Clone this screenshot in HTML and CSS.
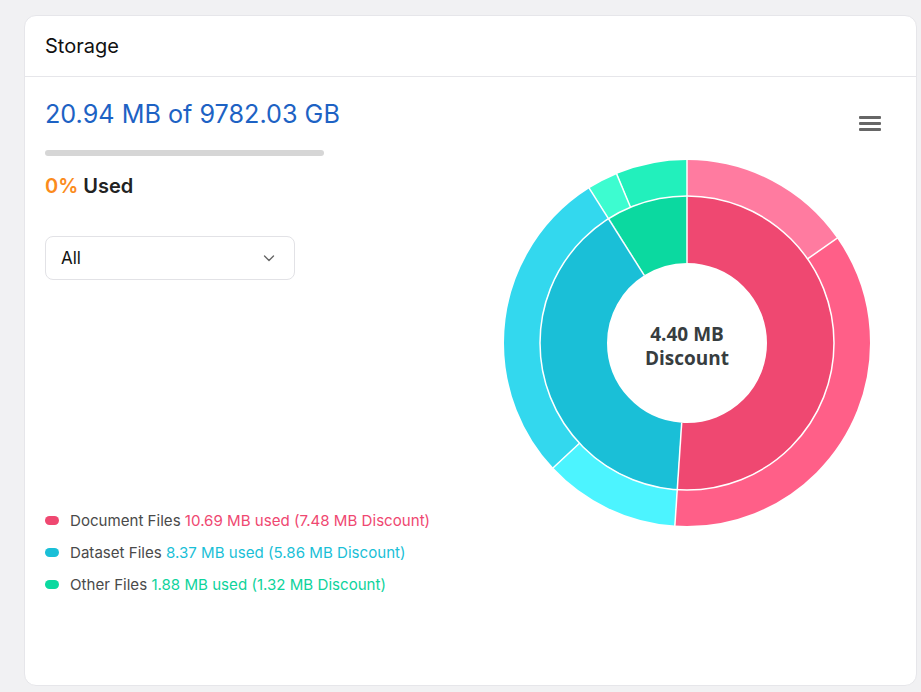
FILE: index.html
```html
<!DOCTYPE html>
<html lang="en">

<head>
    <meta charset="UTF-8">
    <meta name="viewport" content="width=device-width, initial-scale=1.0">
    <title>Storage</title>
    <link rel="stylesheet" href="styles.css">
</head>

<body>
    <div class="card">
        <div class="card-header">Storage</div>

        <div class="card-body">
            <div class="usage">
                <h2 class="usage-total">20.94 MB of 9782.03 GB</h2>
                <div class="progress"><div class="progress-fill"></div></div>
                <p class="usage-percent"><span class="percent">0%</span> Used</p>

                <div class="select">
                    <span>All</span>
                    <svg width="14" height="14" viewBox="0 0 14 14">
                        <path d="M2.5 5l4.5 4.5 4.5-4.5" fill="none" stroke="#666" stroke-width="1.4" stroke-linecap="round" stroke-linejoin="round" />
                    </svg>
                </div>

                <ul class="legend">
                    <li><span class="dot doc"></span>Document Files <span class="val doc-text">10.69 MB used (7.48 MB Discount)</span></li>
                    <li><span class="dot data"></span>Dataset Files <span class="val data-text">8.37 MB used (5.86 MB Discount)</span></li>
                    <li><span class="dot other"></span>Other Files <span class="val other-text">1.88 MB used (1.32 MB Discount)</span></li>
                </ul>
            </div>

            <div class="chart">
                <button class="menu" aria-label="menu">
                    <span></span><span></span><span></span>
                </button>
                <svg class="donut" width="380" height="380" viewBox="0 0 380 380">
                    <g transform="translate(190 190) rotate(-90)" fill="none">
                        <!-- outer ring: r 147..183 -->
                        <circle r="165" stroke="#ff7ba0" stroke-width="36" stroke-dasharray="158.68 1036.73" stroke-dashoffset="0" />
                        <circle r="165" stroke="#ff5f88" stroke-width="36" stroke-dasharray="370.63 1036.73" stroke-dashoffset="-158.68" />
                        <circle r="165" stroke="#4cf4ff" stroke-width="36" stroke-dasharray="124.41 1036.73" stroke-dashoffset="-529.31" />
                        <circle r="165" stroke="#33d8ee" stroke-width="36" stroke-dasharray="290.0 1036.73" stroke-dashoffset="-653.71" />
                        <circle r="165" stroke="#3dfcd0" stroke-width="36" stroke-dasharray="27.93 1036.73" stroke-dashoffset="-943.71" />
                        <circle r="165" stroke="#22f0bc" stroke-width="36" stroke-dasharray="65.08 1036.73" stroke-dashoffset="-971.65" />
                        <!-- inner ring: r 80..147 -->
                        <circle r="113.5" stroke="#ef4871" stroke-width="67" stroke-dasharray="364.1 713.14" stroke-dashoffset="0" />
                        <circle r="113.5" stroke="#1abfd7" stroke-width="67" stroke-dasharray="285.06 713.14" stroke-dashoffset="-364.1" />
                        <circle r="113.5" stroke="#0bd9a0" stroke-width="67" stroke-dasharray="63.98 713.14" stroke-dashoffset="-649.16" />
                        <circle r="147" stroke="#fff" stroke-width="1.5" />
                    </g>
                    <g transform="translate(190 190)" stroke="#fff" stroke-width="1.5">
                        <line x1="0" y1="-80" x2="0" y2="-184" />
                        <line x1="0" y1="-80" x2="0" y2="-184" transform="rotate(183.8)" />
                        <line x1="0" y1="-80" x2="0" y2="-184" transform="rotate(327.7)" />
                        <line x1="0" y1="-147" x2="0" y2="-184" transform="rotate(55.1)" />
                        <line x1="0" y1="-147" x2="0" y2="-184" transform="rotate(227)" />
                        <line x1="0" y1="-147" x2="0" y2="-184" transform="rotate(337.4)" />
                    </g>
                    <text x="190" y="188" class="center-label">4.40 MB</text>
                    <text x="190" y="212" class="center-label">Discount</text>
                </svg>
            </div>
        </div>
    </div>
</body>

</html>
```

FILE: styles.css
```css
body {
    font-family: Inter, "Noto Sans", sans-serif;
    margin: 0;
    padding: 15px 4px 5px 24px;
    background-color: #f1f1f3;
}

.card {
    height: 671px;
    background-color: white;
    border: 1px solid #e6e6ea;
    border-radius: 12px;
    box-sizing: border-box;
}

.card-header {
    height: 60px;
    display: flex;
    align-items: center;
    padding: 0 20px;
    font-size: 20px;
    color: #111;
    border-bottom: 1px solid #e6e6ea;
}

.card-body {
    display: flex;
    padding: 22px 20px;
}

.usage {
    width: 440px;
}

.usage-total {
    margin: 0;
    font-size: 25.2px;
    font-weight: 400;
    line-height: 30px;
    color: #1d62c4;
}

.progress {
    width: 279px;
    height: 6px;
    margin-top: 21px;
    background-color: #d6d6d6;
    border-radius: 3px;
    overflow: hidden;
}

.progress-fill {
    width: 0;
    height: 100%;
}

.usage-percent {
    margin: 19px 0 0;
    font-size: 20px;
    font-weight: 600;
    line-height: 22px;
    color: #222;
}

.percent {
    color: #fb8b1c;
}

.select {
    width: 250px;
    height: 44px;
    margin-top: 39px;
    padding: 0 18px 0 15px;
    box-sizing: border-box;
    display: flex;
    align-items: center;
    justify-content: space-between;
    border: 1px solid #e2e2e6;
    border-radius: 8px;
    font-size: 17px;
    color: #111;
}

.legend {
    list-style: none;
    margin: 230px 0 0;
    padding: 0;
}

.legend li {
    display: flex;
    align-items: center;
    height: 20px;
    margin-bottom: 12px;
    font-size: 15.1px;
    color: #4a4a4a;
    white-space: pre;
}

.dot {
    width: 14px;
    height: 9px;
    border-radius: 5px;
    margin-right: 11px;
}

.dot.doc { background-color: #ef4871; }
.dot.data { background-color: #1abfd7; }
.dot.other { background-color: #0bd9a0; }

.doc-text { color: #ef4871; }
.data-text { color: #1abfd7; }
.other-text { color: #0fd39c; }

.chart {
    flex: 1;
    position: relative;
}

.donut {
    display: block;
    margin: 54px 0 0 12px;
}

.center-label {
    font-family: "Open Sans", sans-serif;
    font-size: 19px;
    font-weight: 700;
    fill: #373d3f;
    text-anchor: middle;
}

.menu {
    position: absolute;
    top: 17px;
    right: 15px;
    width: 22px;
    padding: 0;
    border: none;
    background: none;
    display: flex;
    flex-direction: column;
    gap: 3px;
    cursor: pointer;
}

.menu span {
    display: block;
    height: 3px;
    background-color: #666;
    border-radius: 1px;
}
```
